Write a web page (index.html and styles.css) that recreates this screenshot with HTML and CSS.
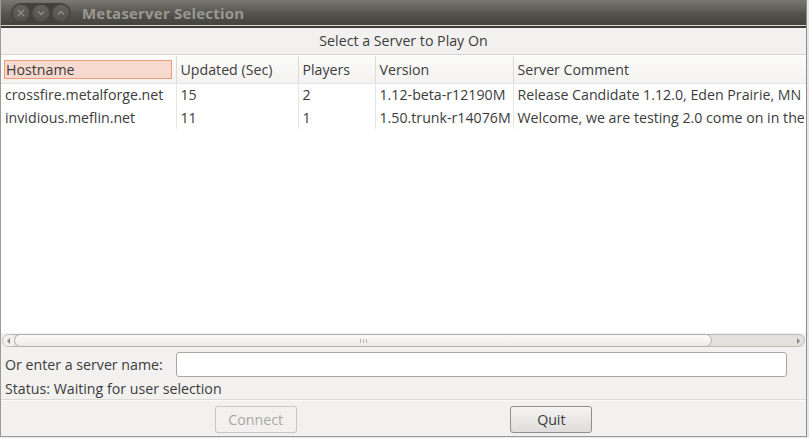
FILE: index.html
```html
<!DOCTYPE html>
<html lang="en">
<head>
    <meta charset="UTF-8">
    <title>Metaserver Selection</title>
    <link rel="stylesheet" href="styles.css">
</head>
<body>
<div class="window">
    <div class="titlebar">
        <div class="controls">
            <span class="ctl">
                <svg width="8" height="8" viewBox="0 0 8 8"><path d="M1 1L7 7M7 1L1 7" stroke="#8f8d87" stroke-width="1.4" fill="none"/></svg>
            </span>
            <span class="ctl">
                <svg width="8" height="8" viewBox="0 0 8 8"><path d="M1 2.5L4 5.5L7 2.5" stroke="#8f8d87" stroke-width="1.4" fill="none"/></svg>
            </span>
            <span class="ctl">
                <svg width="8" height="8" viewBox="0 0 8 8"><path d="M1 5.5L4 2.5L7 5.5" stroke="#8f8d87" stroke-width="1.4" fill="none"/></svg>
            </span>
        </div>
        <span class="title">Metaserver Selection</span>
    </div>
    <div class="titleline"></div>

    <div class="heading">Select a Server to Play On</div>

    <div class="list">
        <table class="servers">
            <colgroup>
                <col class="c-host">
                <col class="c-upd">
                <col class="c-play">
                <col class="c-ver">
                <col class="c-com">
            </colgroup>
            <thead>
            <tr>
                <th class="sorted"><span>Hostname</span></th>
                <th>Updated (Sec)</th>
                <th>Players</th>
                <th>Version</th>
                <th>Server Comment</th>
            </tr>
            </thead>
            <tbody>
            <tr>
                <td>crossfire.metalforge.net</td>
                <td>15</td>
                <td>2</td>
                <td>1.12-beta-r12190M</td>
                <td>Release Candidate 1.12.0, Eden Prairie, MN</td>
            </tr>
            <tr>
                <td>invidious.meflin.net</td>
                <td>11</td>
                <td>1</td>
                <td>1.50.trunk-r14076M</td>
                <td>Welcome, we are testing 2.0 come on in the</td>
            </tr>
            </tbody>
        </table>
    </div>

    <div class="hscroll">
        <div class="trough">
            <span class="arrow left"></span>
            <div class="thumb"><span class="grip"></span></div>
            <span class="rest"></span>
            <span class="arrow right"></span>
        </div>
    </div>

    <div class="entry">
        <label class="entry-label" for="server">Or enter a server name:</label>
        <input class="entry-input" id="server" type="text">
    </div>

    <div class="status">Status: Waiting for user selection</div>

    <div class="buttons">
        <button class="btn" disabled>Connect</button>
        <button class="btn">Quit</button>
    </div>
</div>
</body>
</html>
```

FILE: styles.css
```css
*{
    margin: 0;
    padding: 0;
    box-sizing: border-box;
}
body{
    background: #e9e8e6;
    font-family: "Open Sans", "Noto Sans", sans-serif;
    font-size: 14.2px;
    color: #3c3c3c;
}
.window{
    width: 807px;
    height: 437px;
    display: flex;
    flex-direction: column;
    background: #f2f1f0;
    border-left: 1px solid #9c9a95;
    border-right: 1px solid #8e8c87;
    border-bottom: 1px solid #9c9a95;
}

/* title bar */
.titlebar{
    height: 25px;
    flex: none;
    display: flex;
    align-items: center;
    background: linear-gradient(#7a7873, #55534e 55%, #43423d);
}
.controls{
    display: flex;
    gap: 2px;
    margin-left: 10px;
    padding: 1px 1px;
    border-radius: 10px;
    background: #42413c;
}
.ctl{
    width: 18px;
    height: 18px;
    border-radius: 50%;
    display: flex;
    align-items: center;
    justify-content: center;
    background: linear-gradient(#64625d, #54524d);
    border: 1px solid #4c4a45;
}
.title{
    margin-left: 11px;
    font-weight: bold;
    font-size: 15px;
    color: #9a9892;
    letter-spacing: 0.2px;
}
.titleline{
    height: 3px;
    flex: none;
    border-top: 1px solid #d9d7d1;
    background: #3c3b37;
}

.heading{
    height: 27px;
    flex: none;
    line-height: 26px;
    text-align: center;
    border-bottom: 1px solid #d6d4d0;
}

/* server list */
.list{
    flex: 1;
    background: #fff;
    overflow: hidden;
    padding-top: 1px;
}
.servers{
    table-layout: fixed;
    border-collapse: collapse;
    width: 900px;
    white-space: nowrap;
}
.c-host{ width: 175px; }
.c-upd{ width: 122px; }
.c-play{ width: 77px; }
.c-ver{ width: 138px; }
.c-com{ width: 388px; }
.servers th{
    height: 27px;
    font-weight: normal;
    text-align: left;
    padding: 0 4px;
    background: linear-gradient(#fbfbfa, #f3f2f1);
    border-bottom: 1px solid #e4e3e1;
    border-left: 1px solid #dcdbd8;
}
.servers th:first-child{
    border-left: none;
}
.servers th.sorted{
    padding: 4px 4px 3px 3px;
}
.servers th.sorted span{
    display: block;
    height: 19px;
    line-height: 17px;
    padding-left: 1px;
    background: #f6dad0;
    border: 1px solid #f09a78;
}
.servers td{
    height: 23px;
    padding: 0 4px;
    overflow: hidden;
    border-left: 1px solid #e6e5e3;
}
.servers td:first-child{
    border-left: none;
}

/* horizontal scrollbar */
.hscroll{
    height: 15px;
    flex: none;
    padding: 1px;
}
.trough{
    height: 13px;
    display: flex;
    align-items: stretch;
    border: 1px solid #bdbbb6;
    border-radius: 7px;
    background: #e2e1de;
}
.arrow{
    width: 11px;
    position: relative;
}
.arrow::after{
    content: "";
    position: absolute;
    top: 3px;
    border-top: 3px solid transparent;
    border-bottom: 3px solid transparent;
}
.arrow.left::after{
    left: 4px;
    border-right: 3px solid #8a8884;
}
.arrow.right::after{
    left: 4px;
    border-left: 3px solid #8a8884;
}
.arrow.left{
    background: #f2f1ef;
    border-radius: 7px 0 0 7px;
}
.thumb{
    width: 698px;
    margin: -1px 0;
    border: 1px solid #b3b1ac;
    border-radius: 7px;
    background: linear-gradient(#fbfbfa, #ecebe9);
    display: flex;
    justify-content: center;
    align-items: center;
}
.grip{
    width: 7px;
    height: 4px;
    border-left: 1px solid #b4b2ad;
    border-right: 1px solid #b4b2ad;
    position: relative;
}
.grip::after{
    content: "";
    position: absolute;
    left: 2px;
    top: 0;
    height: 4px;
    border-left: 1px solid #b4b2ad;
}
.rest{
    flex: 1;
}

/* entry */
.entry{
    height: 31px;
    flex: none;
    display: flex;
    align-items: center;
    padding: 2px 19px 0 4px;
}
.entry-label{
    flex: 0 0 171px;
}
.entry-input{
    flex: 1;
    height: 25px;
    border: 1px solid #a9a7a2;
    border-radius: 3px;
    background: #fff;
    outline: none;
}

.status{
    height: 20px;
    flex: none;
    line-height: 19px;
    padding-left: 4px;
}

/* buttons */
.buttons{
    height: 37px;
    flex: none;
    display: flex;
    justify-content: space-evenly;
    align-items: flex-start;
    padding-top: 6px;
    border-top: 1px solid #dcdad6;
    box-shadow: inset 0 1px 0 #fbfbfa;
}
.btn{
    width: 82px;
    height: 27px;
    font-family: inherit;
    font-size: 14.2px;
    color: #3c3c3c;
    border: 1px solid #908e89;
    border-radius: 3px;
    background: linear-gradient(#f5f4f2, #dedddb);
}
.btn:disabled{
    color: #a9a7a3;
    border-color: #c8c6c2;
    background: #f2f1ef;
}
```
